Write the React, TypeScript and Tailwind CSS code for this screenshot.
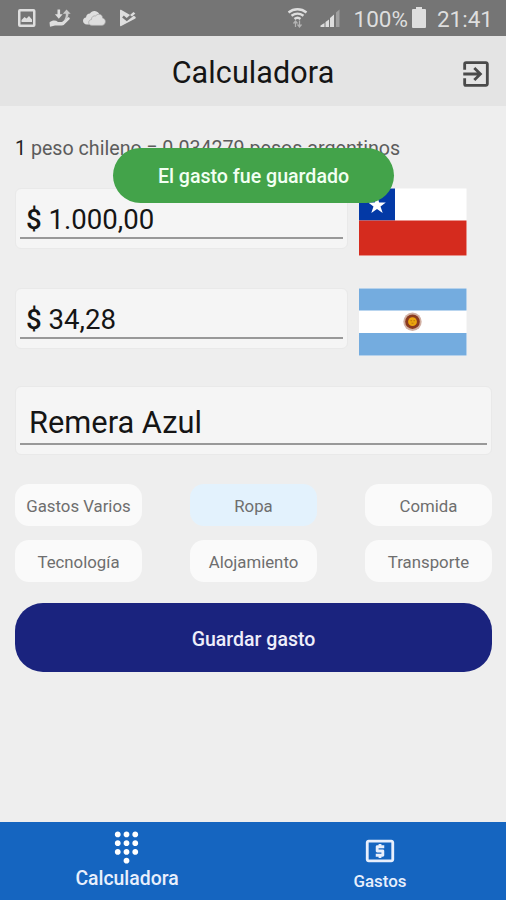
import React, { useState } from "react";
import { MdDialpad, MdExitToApp, MdLocalAtm } from "react-icons/md";

const categories = [
  "Gastos Varios",
  "Ropa",
  "Comida",
  "Tecnología",
  "Alojamiento",
  "Transporte",
];

function StatusBar() {
  return (
    <div className="flex h-9 items-center justify-between bg-[#757575] text-[#dedede]">
      <svg width="140" height="36" viewBox="0 0 140 36" fill="currentColor">
        {/* picture */}
        <path
          fillRule="evenodd"
          d="M20 9h13.500a2 2 0 0 1 2 2v14a2 2 0 0 1-2 2H20a2 2 0 0 1-2-2V11a2 2 0 0 1 2-2zm.5 2.500v13H33v-13zM21.500 22v-2l3-3 2 1.500 2.500-2.500 3 3.500V22z"
        />
        {/* hand with arrows */}
        <path d="M49.500 22.500c3-2.500 6-2.500 8.500-.5h4l5.500-4.500c1.500-1 3 .3 2 1.800l-5.800 5.700c-1.200.9-7 .6-8.700.4l-5 1.300z" />
        <path d="M57.500 9.500h2.600v4.800h2.600l-3.900 4.400-3.900-4.400h2.600z" />
        <path d="M66.500 9.500l4.200 4.300h-2.200c0 2.900-1.400 5-4.500 6.200 1.500-2 1.900-3.800 1.800-6.200h-3z" opacity=".8" />
        {/* cloud */}
        <path d="M87 24.500c-2.500 0-4-1.700-4-3.700 0-1.900 1.300-3.100 3-3.300.2-2.400 1.900-3.900 4-3.900 1-1.900 2.800-2.800 4.800-2.600 2.500.2 4.100 1.700 4.700 3.800l-2 9.700z" />
        <path
          stroke="#a0a0a0"
          strokeWidth=".7"
          d="M92 25.400c-2 0-3.300-1.200-3.300-2.900 0-1.600 1.100-2.800 2.700-2.900 0-2.600 2-4.200 4.400-3.700 1.200-1.600 3-2.100 4.600-1.400 1.500.6 2.200 2 2.200 3.600 1.700.3 2.800 1.700 2.800 3.500 0 2.200-1.500 3.800-3.400 3.800z"
        />
        {/* play with check */}
        <path d="M121 9.800c-.7-.3-1 0-1 .7v14.700c0 .9.500 1.200 1.200.8l13.800-7.300c1-.6 1-1.600 0-2.200l-1.300-.7-6.900 5.500-4.700-3.900 1.700-1.900 2.900 2.400 3.400-2.900z" />
        <path d="M130 15l3.500-3 1.800 1.600-3.300 2.900z" />
      </svg>
      <div className="flex items-center pr-[13px]">
        <svg width="60" height="36" viewBox="0 0 60 36" fill="none" stroke="currentColor" className="mr-[10px]">
          {/* wifi */}
          <g strokeWidth="2.400">
            <path d="M4.500 12.500c5.500-4.300 12.500-4.300 18 0" />
            <path d="M7.500 15.800c4-2.900 8-2.900 12 0" />
            <path d="M10.500 19c2-1.600 4-1.600 6 0" />
          </g>
          <path d="M11.500 27v-6m-2 2.500 2-2.500 2 2.500M15.500 20.500V27m-2-2.500 2 2.500 2-2.500" strokeWidth="1.300" opacity=".6" />
          {/* signal */}
          <g stroke="none" fill="currentColor">
            <path d="M36.500 27v-1.500l4-2.500v4zM41.500 27v-5l3.500-2.500V27zM46 27v-9l4-3.500V27z" />
            <path d="M52 27V12.500l3.500-3V27z" opacity=".4" />
          </g>
        </svg>
        <span className="pt-0.5 text-[22.500px] leading-9">100%</span>
        <svg width="16" height="22" viewBox="0 0 16 22" fill="currentColor" className="ml-[3px]">
          <path d="M5 0h6v2h3a1 1 0 0 1 1 1v17a1 1 0 0 1-1 1H2a1 1 0 0 1-1-1V3a1 1 0 0 1 1-1h3z" />
        </svg>
        <span className="ml-[10px] pt-0.5 text-[22.500px] leading-9">21:41</span>
      </div>
    </div>
  );
}

function Header() {
  return (
    <header className="grid h-[70px] grid-cols-[1fr_auto_1fr] items-center bg-[#e4e4e4]">
      <h1 className="col-start-2 pt-[3px] text-[30.500px] tracking-[0.100px] text-[#151515]">Calculadora</h1>
      <button className="mt-[6px] mr-[13px] justify-self-end text-[#4a4a4a]">
        <MdExitToApp size={34} />
      </button>
    </header>
  );
}

function ChileFlag() {
  return (
    <svg width="108" height="68" viewBox="0 0 108 68">
      <rect y=".5" width="107.500" height="67" fill="#fff" />
      <rect y=".5" width="36" height="32" fill="#0339a6" />
      <rect y="32.500" width="107.500" height="35" fill="#d52b1e" />
      <path fill="#fff" d="M18 8l2.200 6.500h6.600l-5.300 3.900 2.200 6.600-5.700-4.100-5.700 4.100 2.200-6.600-5.300-3.900h6.600z" />
    </svg>
  );
}

function ArgentinaFlag() {
  return (
    <svg width="108" height="68" viewBox="0 0 108 68">
      <rect y=".5" width="107.500" height="67" fill="#fff" />
      <rect y=".5" width="107.500" height="22" fill="#74acdf" />
      <rect y="45" width="107.500" height="22.500" fill="#74acdf" />
      <circle cx="53.500" cy="33.700" r="9.200" fill="#b98572" opacity=".65" />
      <circle cx="53.500" cy="33.700" r="7.300" fill="#8a3b20" />
      <circle cx="53.500" cy="33.700" r="4.400" fill="#eba50e" />
      <path d="M51.500 32.700H53m1.500 0H56m-3.500 2.500h2" stroke="#b06a10" strokeWidth=".8" />
    </svg>
  );
}

function AmountInput({ amount, flag }: { amount: string; flag: React.ReactNode }) {
  return (
    <div className="flex h-[68px] items-start gap-[11px]">
      <div className="h-[61px] w-[333px] rounded-md border border-[#e9e9e9] bg-[#f5f5f5] px-1">
        <div className="h-[50px] border-b-2 border-[#999] pl-[6px] text-[27.600px] leading-[61px] text-[#151515]">
          <span className="font-medium">$</span> {amount}
        </div>
      </div>
      {flag}
    </div>
  );
}

export default function App() {
  const [selected, setSelected] = useState("Ropa");

  return (
    <div className="relative flex h-[900px] w-[506px] flex-col overflow-hidden bg-[#eee] font-['Roboto',sans-serif]">
      <StatusBar />
      <Header />

      <main className="flex-1 pt-[31px] pr-[14px] pl-[15px]">
        <p className="text-[19.650px] leading-6 text-[#5c5c5c]">
          <span className="text-[#222]">1</span> peso chileno = 0.034279 pesos argentinos
        </p>

        <div className="mt-[27px] flex flex-col gap-8">
          <AmountInput amount="1.000,00" flag={<ChileFlag />} />
          <AmountInput amount="34,28" flag={<ArgentinaFlag />} />
        </div>

        <div className="mt-[30px] h-[69px] rounded-md border border-[#e9e9e9] bg-[#f5f5f5] px-1">
          <div className="h-[58px] border-b-2 border-[#999] pl-[9px] text-[30.800px] leading-[72px] text-[#151515]">
            Remera Azul
          </div>
        </div>

        <div className="mt-[29px] grid grid-cols-[repeat(3,127px)] justify-between gap-y-[14px]">
          {categories.map((category) => (
            <button
              key={category}
              onClick={() => setSelected(category)}
              className={`h-[42px] rounded-[14px] pt-[3px] text-[16.800px] text-[#6e6e6e] ${
                selected === category ? "bg-[#e3f2fd]" : "bg-[#fafafa]"
              }`}
            >
              {category}
            </button>
          ))}
        </div>

        <button className="mt-[21px] h-[69px] w-full rounded-[28px] bg-[#1a237e] pt-[5px] text-[19.500px] font-medium text-[#eeeefa]">
          Guardar gasto
        </button>
      </main>

      <nav className="grid h-[78px] grid-cols-2 bg-[#1565c0] text-[#e8effc]">
        <button className="flex flex-col items-center pt-2">
          <MdDialpad size={35} className="text-white" />
          <span className="mt-0.5 pl-px text-[19.400px] leading-6 font-medium">Calculadora</span>
        </button>
        <button className="flex flex-col items-center pt-3">
          <MdLocalAtm size={34} />
          <span className="mt-px pl-px text-[16.900px] leading-6 font-medium">Gastos</span>
        </button>
      </nav>

      {/* Toast */}
      <div className="absolute top-[148px] left-[113px] flex h-[55px] w-[281px] items-center justify-center rounded-full bg-[#43a34a] pt-0.5 text-[19.600px] font-medium text-[#f2fff2]">
        El gasto fue guardado
      </div>
    </div>
  );
}
